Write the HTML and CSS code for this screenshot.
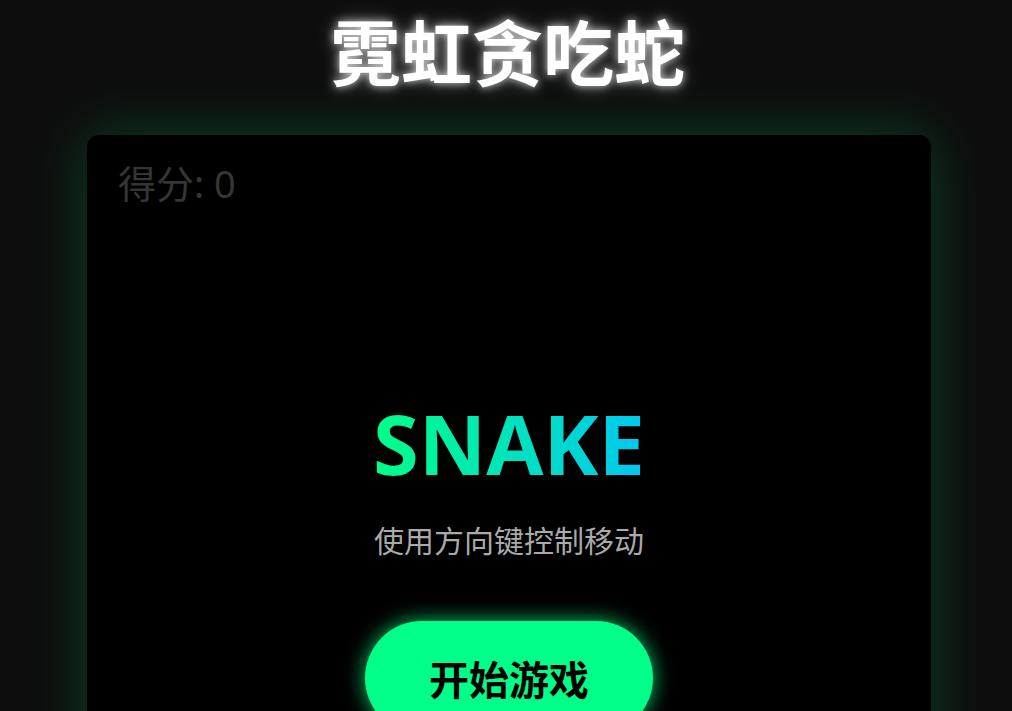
FILE: index.html
```html
<!DOCTYPE html>
<html lang="zh">
<head>
<meta charset="utf-8">
<title>霓虹贪吃蛇</title>
<link rel="stylesheet" href="styles.css">
</head>
<body>
<h1 class="title">霓虹贪吃蛇</h1>
<div class="board">
  <div class="score">得分: 0</div>
  <div class="overlay">
    <div class="logo">SNAKE</div>
    <p class="hint">使用方向键控制移动</p>
    <button class="start">开始游戏</button>
  </div>
</div>
</body>
</html>
```
FILE: styles.css
```css
html, body {
  margin: 0;
  padding: 0;
  background: #0d0d0d;
  height: 100%;
  overflow: hidden;
}
body {
  display: flex;
  flex-direction: column;
  align-items: center;
  font-family: "Noto Sans", "Noto Sans CJK SC", sans-serif;
}
.title {
  flex-shrink: 0;
  margin: 1px 0 38px 3px;
  font-size: 71px;
  line-height: 96px;
  font-weight: 700;
  color: #fff;
  font-family: "Noto Sans CJK SC", sans-serif;
  text-shadow: 0 0 8px rgba(255,255,255,0.8), 0 0 20px rgba(255,255,255,0.35);
}
.board {
  position: relative;
  width: 844px;
  height: 700px;
  margin-left: 6px;
  flex-shrink: 0;
  background: #000;
  border-radius: 12px;
  box-shadow: 0 0 60px rgba(0,255,136,0.22);
}
.score {
  position: absolute;
  left: 31px;
  top: 25px;
  font-size: 38px;
  line-height: 46px;
  color: #353535;
}
.overlay {
  display: flex;
  flex-direction: column;
  align-items: center;
  padding-top: 266px;
}
.logo {
  font-family: "Open Sans", sans-serif;
  font-weight: 700;
  font-size: 83px;
  line-height: 84px;
  background: linear-gradient(90deg, #00ff88, #00c8f0);
  -webkit-background-clip: text;
  background-clip: text;
  color: transparent;
}
.hint {
  margin: 36px 0 64px;
  font-size: 30px;
  line-height: 36px;
  color: #aaaaaa;
  font-family: "Noto Sans CJK SC", sans-serif;
}
.start {
  border: none;
  padding: 33px 64px;
  font-size: 40px;
  line-height: 48px;
  font-weight: 700;
  font-family: "Noto Sans CJK SC", sans-serif;
  color: #000;
  background: #00ff88;
  border-radius: 57px;
  box-shadow: 0 0 20px rgba(0,255,136,0.8);
}
```
